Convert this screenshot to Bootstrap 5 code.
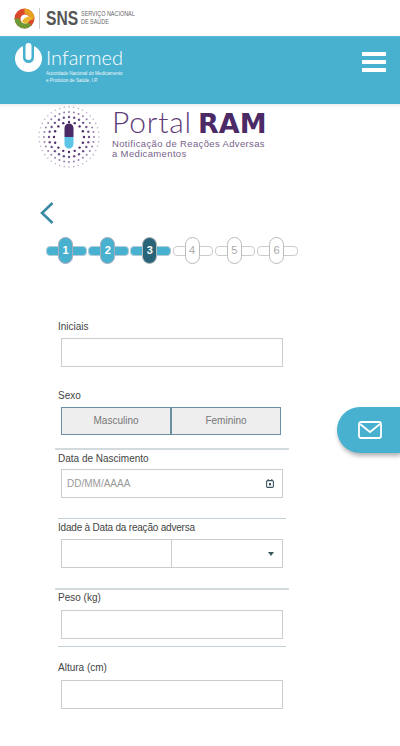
<!DOCTYPE html>
<html lang="pt">
<head>
    <meta charset="UTF-8">
    <title>Portal RAM</title>
    <link href="https://cdn.jsdelivr.net/npm/bootstrap@5.3.0/dist/css/bootstrap.min.css" rel="stylesheet">
    <style>
        body {
            font-family: "Liberation Sans", Arial, sans-serif;
            color: #444;
            background: #fff;
            height: 746px;
            overflow: hidden;
            position: relative;
        }
        .sns-bar { height: 36px; padding-left: 14px; }
        .sns-sep { width: 1px; height: 21px; background: #ccc; margin: 0 6px 0 4px; }
        .sns-name { width: 35px; font-size: 20px; line-height: 20px; font-weight: 700; color: #555; transform: scaleX(.78); transform-origin: left center; }
        .sns-sub { font-size: 8px; line-height: 8.500px; color: #666; text-transform: uppercase; white-space: nowrap; transform: scaleX(.68); transform-origin: left center; }
        .inf-bar { height: 68px; background: #48b1d0; border-top: 1px solid #5fbcd8; padding: 6px 14px 0 15px; color: #fff; }
        .inf-name { font-family: Lato, "Liberation Sans", sans-serif; font-size: 20px; line-height: 24px; margin-left: 4px; font-weight: 300; padding-top: 2px; }
        .inf-sub { font-size: 4.600px; line-height: 6.500px; margin: 2px 0 0 4px; opacity: .9; }
        .burger { width: 24px; margin-top: 9px; }
        .burger span { display: block; height: 4px; background: #fff; margin-bottom: 4px; }
        .ram-logo { padding-left: 37px; height: 65px; box-shadow: inset 0 5px 4px -4px #e4e4e4; }
        .ram-text { margin-left: 11px; margin-top: -8px; }
        .ram-title { font-family: Lato, "Liberation Sans", sans-serif; font-weight: 300; font-size: 30px; line-height: 30px; color: #5f3c78; letter-spacing: .8px; white-space: nowrap; }
        .ram-title b { color: #4b2a66; font-family: "DejaVu Sans", sans-serif; font-weight: 700; font-size: 27px; letter-spacing: 0; margin-left: -3px; }
        .ram-sub { font-size: 9.500px; line-height: 10px; color: #77638a; letter-spacing: .35px; }
        .back-row { padding: 31px 0 0 39px; height: 68px; }
        .stepper { padding-left: 46px; height: 54px; }
        .step-cell { width: 42.200px; height: 28px; position: relative; }
        .step-bar { position: absolute; left: 0; right: 1.500px; top: 9px; height: 10px; border-radius: 4px; border: 1px solid #ccc; background: #fff; }
        .step-pill { position: absolute; left: 12px; top: 0; width: 15px; height: 27px; border-radius: 8px; border: 1px solid #bbb; background: #fff; color: #aaa; font-size: 11px; display: flex; align-items: center; justify-content: center; }
        .step-done .step-bar, .step-cur .step-bar { background: #48b1d0; border-color: #b4ccd4; }
        .step-done .step-pill { background: #48b1d0; color: #fff; font-weight: 700; border-color: #aab; }
        .step-cur .step-pill { background: #2a6478; color: #fff; font-weight: 700; }
        .ram-form { padding: 29px 0 0 57px; width: 289px; }
        .ram-label { font-size: 10px; line-height: 14px; color: #444; margin: 0 0 4px 1px; display: block; }
        .label-tight { letter-spacing: -.2px; }
        .ram-input { display: block; width: 222px; height: 29px; margin-left: 4px; border: 1px solid #ccc; background: #fff; border-radius: 0; }
        .age-row { margin-left: 4px; width: 222px; }
        .age-row .ram-input { margin: 0; width: 111px; }
        .age-row .ram-input + .ram-input { border-left: 0; }
        .rule-wide { height: 2px; background: #d3dade; margin: 0 0 0 -2px; width: 234px; }
        .rule-short { height: 1px; background: #c5d0d6; margin: 0 3px 0 1px; }
        .sex-btn { width: 110px; height: 28px; background: #eee; border: 1px solid #6b8ea2; color: #777; font-size: 10px; line-height: 26px; text-align: center; }
        .date-hint { font-size: 10px; color: #999; padding: 0 5px; }
        .top-sexo { margin-top: 22px; }
        .top-rule1 { margin-top: 13px; }
        .top-data { margin-top: 2px; }
        .top-rule2 { margin-top: 20px; }
        .top-rule4 { margin-top: 7px; }
        .top-altura { margin-top: 14px; }
        .label-snug { margin-bottom: 3px; }
        .label-loose { margin-bottom: 5px; }
        .top-peso { margin-top: 1px; }
        .float-mail { position: absolute; right: 0; top: 407px; width: 63px; height: 46px; background: #48b1d0; border-radius: 23px 0 0 23px; box-shadow: 1px 3px 4px rgba(0,0,0,.3); padding-left: 21px; }
    </style>
</head>
<body>
    <div class="sns-bar d-flex align-items-center">
        <svg width="21" height="21" viewBox="0 0 21 21">
            <circle cx="10.500" cy="10.500" r="10" fill="#d9482b"/>
            <path d="M10.500.5a10 10 0 0 1 10 10h-5a5 5 0 0 0-5-5z" fill="#e9a21f"/>
            <path d="M.5 10.500a10 10 0 0 0 10 10 10 10 0 0 0 7-3l-4-3.500a5 5 0 0 1-3 1 5 5 0 0 1-5-4.500z" fill="#6d9a35"/>
            <circle cx="11" cy="11" r="4.500" fill="#fff"/>
            <path d="M8 14c1-4 5-6 9-5l3 3c-3-1-6 1-7 4z" fill="#e8b52c"/>
        </svg>
        <div class="sns-sep"></div>
        <span class="sns-name">SNS</span>
        <span class="sns-sub">Serviço Nacional<br>de Saúde</span>
    </div>

    <div class="inf-bar d-flex justify-content-between">
        <div class="d-flex">
            <svg width="27" height="29" viewBox="0 0 27 29">
                <circle cx="13.500" cy="15.500" r="13.500" fill="#fff"/>
                <rect x="8" y="-6" width="11" height="26" rx="5.500" fill="#48b1d0"/>
                <rect x="10.500" y="0" width="6" height="17" rx="3" fill="#fff"/>
            </svg>
            <div>
                <div class="inf-name">Infarmed</div>
                <div class="inf-sub">Autoridade Nacional do Medicamento<br>e Produtos de Saúde, I.P.</div>
            </div>
        </div>
        <div class="burger"><span></span><span></span><span></span></div>
    </div>

    <div class="ram-logo d-flex align-items-center">
        <svg width="64" height="64" viewBox="0 0 64 64" id="dots"></svg>
        <div class="ram-text">
            <div class="ram-title">Portal <b>RAM</b></div>
            <div class="ram-sub">Notificação de Reações Adversas<br>a Medicamentos</div>
        </div>
    </div>

    <div class="back-row">
        <svg width="16" height="24" viewBox="0 0 16 24">
            <path d="M13.500 2 3 12l10.500 10" fill="none" stroke="#3a8aa6" stroke-width="2.600"/>
        </svg>
    </div>

    <div class="stepper d-flex">
        <div class="step-cell step-done"><div class="step-bar"></div><div class="step-pill">1</div></div>
        <div class="step-cell step-done"><div class="step-bar"></div><div class="step-pill">2</div></div>
        <div class="step-cell step-cur"><div class="step-bar"></div><div class="step-pill">3</div></div>
        <div class="step-cell"><div class="step-bar"></div><div class="step-pill">4</div></div>
        <div class="step-cell"><div class="step-bar"></div><div class="step-pill">5</div></div>
        <div class="step-cell"><div class="step-bar"></div><div class="step-pill">6</div></div>
    </div>

    <form class="ram-form">
        <label class="ram-label">Iniciais</label>
        <div class="ram-input"></div>

        <label class="ram-label top-sexo">Sexo</label>
        <div class="d-flex ms-1">
            <div class="sex-btn">Masculino</div>
            <div class="sex-btn">Feminino</div>
        </div>
        <div class="rule-wide top-rule1"></div>

        <label class="ram-label top-data label-snug">Data de Nascimento</label>
        <div class="ram-input d-flex align-items-center justify-content-between">
            <span class="date-hint">DD/MM/AAAA</span>
            <svg class="me-2" width="8" height="9" viewBox="0 0 8 9">
                <rect x=".6" y="1.600" width="6.800" height="6.800" rx="1.200" fill="none" stroke="#3c5560" stroke-width="1.100"/>
                <path d="M2.200 0v2M5.800 0v2" stroke="#3c5560" stroke-width="1"/>
                <rect x="3" y="4" width="2" height="2.400" fill="#3c5560"/>
            </svg>
        </div>
        <div class="rule-short top-rule2"></div>

        <label class="ram-label label-tight top-data">Idade à Data da reação adversa</label>
        <div class="age-row d-flex">
            <div class="ram-input"></div>
            <div class="ram-input d-flex align-items-center justify-content-end">
                <svg class="me-2" width="6" height="4" viewBox="0 0 6 4"><path d="M0 0h6L3 4z" fill="#3c5560"/></svg>
            </div>
        </div>
        <div class="rule-wide top-rule2"></div>

        <label class="ram-label top-peso label-loose">Peso (kg)</label>
        <div class="ram-input"></div>
        <div class="rule-short top-rule4"></div>

        <label class="ram-label top-altura label-loose">Altura (cm)</label>
        <div class="ram-input"></div>
    </form>

    <div class="float-mail d-flex align-items-center">
        <svg width="24" height="18" viewBox="0 0 24 18">
            <rect x="1" y="1" width="22" height="16" rx="2" fill="none" stroke="#fff" stroke-width="1.800"/>
            <path d="M2 3l10 8 10-8" fill="none" stroke="#fff" stroke-width="1.800"/>
        </svg>
    </div>

    <script>
        // anel de pontos do logotipo
        const svg = document.getElementById('dots');
        let out = '';
        [[30, 40, .8, '#c2afcd'], [25, 32, 1, '#9a7fae'], [20, 24, 1.2, '#6f4f88'], [15, 16, 1.2, '#4b2a66']].forEach(r => {
            for (let i = 0; i < r[1]; i++) {
                const a = i / r[1] * Math.PI * 2;
                out += `<circle cx="${32 + r[0] * Math.cos(a)}" cy="${32 + r[0] * Math.sin(a)}" r="${r[2]}" fill="${r[3]}"/>`;
            }
        });
        out += '<path d="M27.500 32v-9a4.500 4.500 0 0 1 9 0v9z" fill="#4b2a66"/>';
        out += '<path d="M27.500 32h9v7a4.500 4.500 0 0 1-9 0z" fill="#5cc4e6"/>';
        svg.innerHTML = out;
    </script>
    <script src="https://cdn.jsdelivr.net/npm/bootstrap@5.3.0/dist/js/bootstrap.bundle.min.js"></script>
</body>
</html>
